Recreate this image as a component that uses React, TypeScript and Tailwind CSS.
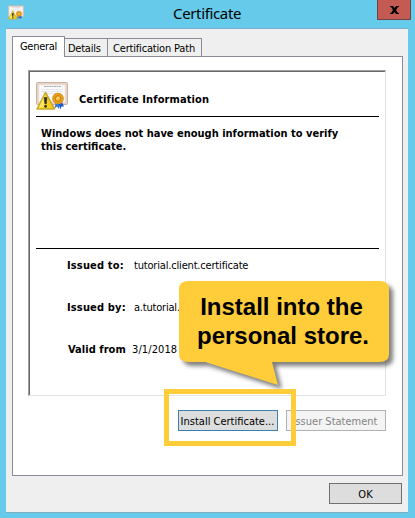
import React from "react";

function CertificateIcon({ className }: { className: string }) {
  return (
    <svg className={className} viewBox="0 0 32 30" fill="none">
      <rect x="0.5" y="1.5" width="31" height="22" rx="1" fill="#e4d2c6" stroke="#c9b2a2" />
      <rect x="3" y="4" width="26" height="17" fill="#fbfbfd" stroke="#f3e8e1" />
      <path d="M8 5.500H25" stroke="#a3adc0" strokeDasharray="2 0.500" />
      <path d="M5 8.500H27M5 10.500H27M7 12.500H25" stroke="#dcdfe8" strokeWidth="0.800" />
      <path d="M20 20L18.500 27.500L21 25.500L23 28L24 21Z" fill="#2d78dc" />
      <path d="M22 21L24.500 28.500L25.500 25.500L28 25.500L25 19Z" fill="#1b5cc7" />
      <circle cx="22" cy="17.500" r="5.700" fill="#e8a01e" />
      <circle cx="22" cy="17.500" r="5.200" stroke="#d08a16" strokeDasharray="1.500 1" />
      <circle cx="22" cy="17.500" r="2.800" fill="#f8bb36" stroke="#c07c14" />
      <path d="M20.500 18L23.500 16" stroke="#ffe08a" />
      <path d="M9.500 11.500L1 28H18.500Z" fill="#f8cf18" stroke="#c9a92e" strokeWidth="1.600" strokeLinejoin="round" />
      <path d="M9.500 13L2.800 26.500H9Z" fill="#ffe75c" />
      <path d="M8.200 16.500H10.900L10.300 22.800H8.800Z" fill="#2d2d2a" stroke="#2d2d2a" strokeWidth="0.600" />
      <circle cx="9.500" cy="25.300" r="1.400" fill="#2d2d2a" />
    </svg>
  );
}

function Callout() {
  return (
    <div className="absolute left-[179px] top-[281px] h-[105px] w-[210px]">
      <svg className="absolute inset-0 overflow-visible drop-shadow-[4px_4px_2px_rgba(0,0,0,0.5)]" width="210" height="105" viewBox="0 0 210 105">
        <path d="M10 0H200Q210 0 210 8V73Q210 81 200 81H93L99 104L26 81H10Q0 81 0 73V8Q0 0 10 0Z" fill="#ffcc3a" />
      </svg>
      <p className="relative pt-[11px] text-center font-['Liberation_Sans',Arial,sans-serif] text-[24px] leading-[29px] font-bold whitespace-nowrap text-black">
        <span className="block pr-[5px]">Install into the</span>
        <span className="block pr-[2px]">personal store.</span>
      </p>
    </div>
  );
}

function Detail({ label, value, labelClass, valueClass }: { label: string; value: string; labelClass: string; valueClass: string }) {
  return (
    <div className="flex h-[42px]">
      <dt className={`${labelClass} font-bold`}>{label}</dt>
      <dd className={valueClass}>{value}</dd>
    </div>
  );
}

export default function App() {
  return (
    <main className="relative flex h-[518px] w-[415px] flex-col overflow-hidden bg-[#66caea] font-['DejaVu_Sans_Condensed','Noto_Sans',Tahoma,sans-serif] text-[11px] leading-[13px] whitespace-nowrap text-black">
      <header className="flex h-7 shrink-0 justify-between pr-1 pl-2">
        <CertificateIcon className="mt-1 h-[17px] w-4" />
        <h1 className="ml-[149px] pt-[3px] font-['Noto_Sans',sans-serif] text-[15px] leading-[20px] tracking-[-0.35px]">Certificate</h1>
        <button className="ml-auto flex h-5 w-[34px] items-center justify-center border border-t-0 border-[#704548] bg-[#c35b52]">
          <svg width="9" height="8" viewBox="0 0 9 8">
            <path d="M0 0H3L4.500 2L6 0H9V1H8L6 4L8 7H9V8H6L4.500 6L3 8H0V7H1L3 4L1 1H0Z" fill="black" />
          </svg>
        </button>
      </header>

      <section className="mr-[7px] ml-[6px] h-[485px] border-t border-b border-t-[#7aaccb] border-b-[#7aaebd] bg-[#efefef] pt-[7px] pl-[6px]">
        <nav className="flex h-[20px] items-end">
          <div className="z-10 -mb-px h-[21px] w-[53px] shrink-0 border border-b-0 border-[#898c95] bg-white pt-[3px] pl-[7px] tracking-[-0.3px]">General</div>
          <div className="h-[18px] w-[43px] border-t border-r border-[#898c95] pt-[3px] pl-[3px] tracking-[-0.25px]">Details</div>
          <div className="h-[18px] w-[94px] border-t border-r border-[#898c95] pt-[3px] pl-[5px] tracking-[-0.18px]">Certification Path</div>
        </nav>
        <div className="h-[420px] w-[391px] border border-[#898c95] bg-white pt-[13px] pl-[15px]">
          <article className="h-[326px] w-[358px] border border-t-[#a0a0a0] border-r-[#e3e3e3] border-b-[#e3e3e3] border-l-[#a0a0a0]">
            <div className="h-full border-t border-l border-[#696969] pl-[6px]">
              <div className="flex h-[45px] w-[343px] border-b border-black pt-[9px]">
                <CertificateIcon className="h-[30px] w-8" />
                <h2 className="pt-[12px] pl-[11px] font-bold tracking-[0.1px]">Certificate Information</h2>
              </div>
              <div className="h-[132px] w-[343px] border-b border-black pt-[10px] pl-[5px] font-bold">
                <p>Windows does not have enough information to verify</p>
                <p>this certificate.</p>
              </div>
              <dl className="pt-[10px]">
                <Detail label="Issued to:" value="tutorial.client.certificate" labelClass="w-[98px] pl-[31px] tracking-[0.15px]" valueClass="tracking-[-0.18px]" />
                <Detail label="Issued by:" value="a.tutorial." labelClass="w-[98px] pl-[31px] tracking-[0.15px]" valueClass="tracking-[-0.2px]" />
                <Detail label="Valid from" value="3/1/2018" labelClass="w-[96px] pl-[32px] tracking-[0.05px]" valueClass="tracking-[0.1px]" />
              </dl>
            </div>
          </article>
          <div className="mt-[14px] ml-[150px] flex gap-2">
            <button className="h-[21px] w-[100px] border border-[#3c7fb1] bg-[#dddddd] pt-px pr-px">Install Certificate...</button>
            <button className="h-[21px] w-[100px] border border-[#adb2b5] bg-[#f4f4f4] pt-px pr-[2px] text-[#838383]">Issuer Statement</button>
          </div>
        </div>
        <button className="mt-[7px] ml-[317px] h-[21px] w-[73px] border border-[#707070] bg-[#dddddd] pt-px">OK</button>
      </section>

      <Callout />
      <div className="absolute left-[164px] top-[389px] h-[57px] w-[132px] border-[5px] border-[#ffcc3a]" />
    </main>
  );
}
